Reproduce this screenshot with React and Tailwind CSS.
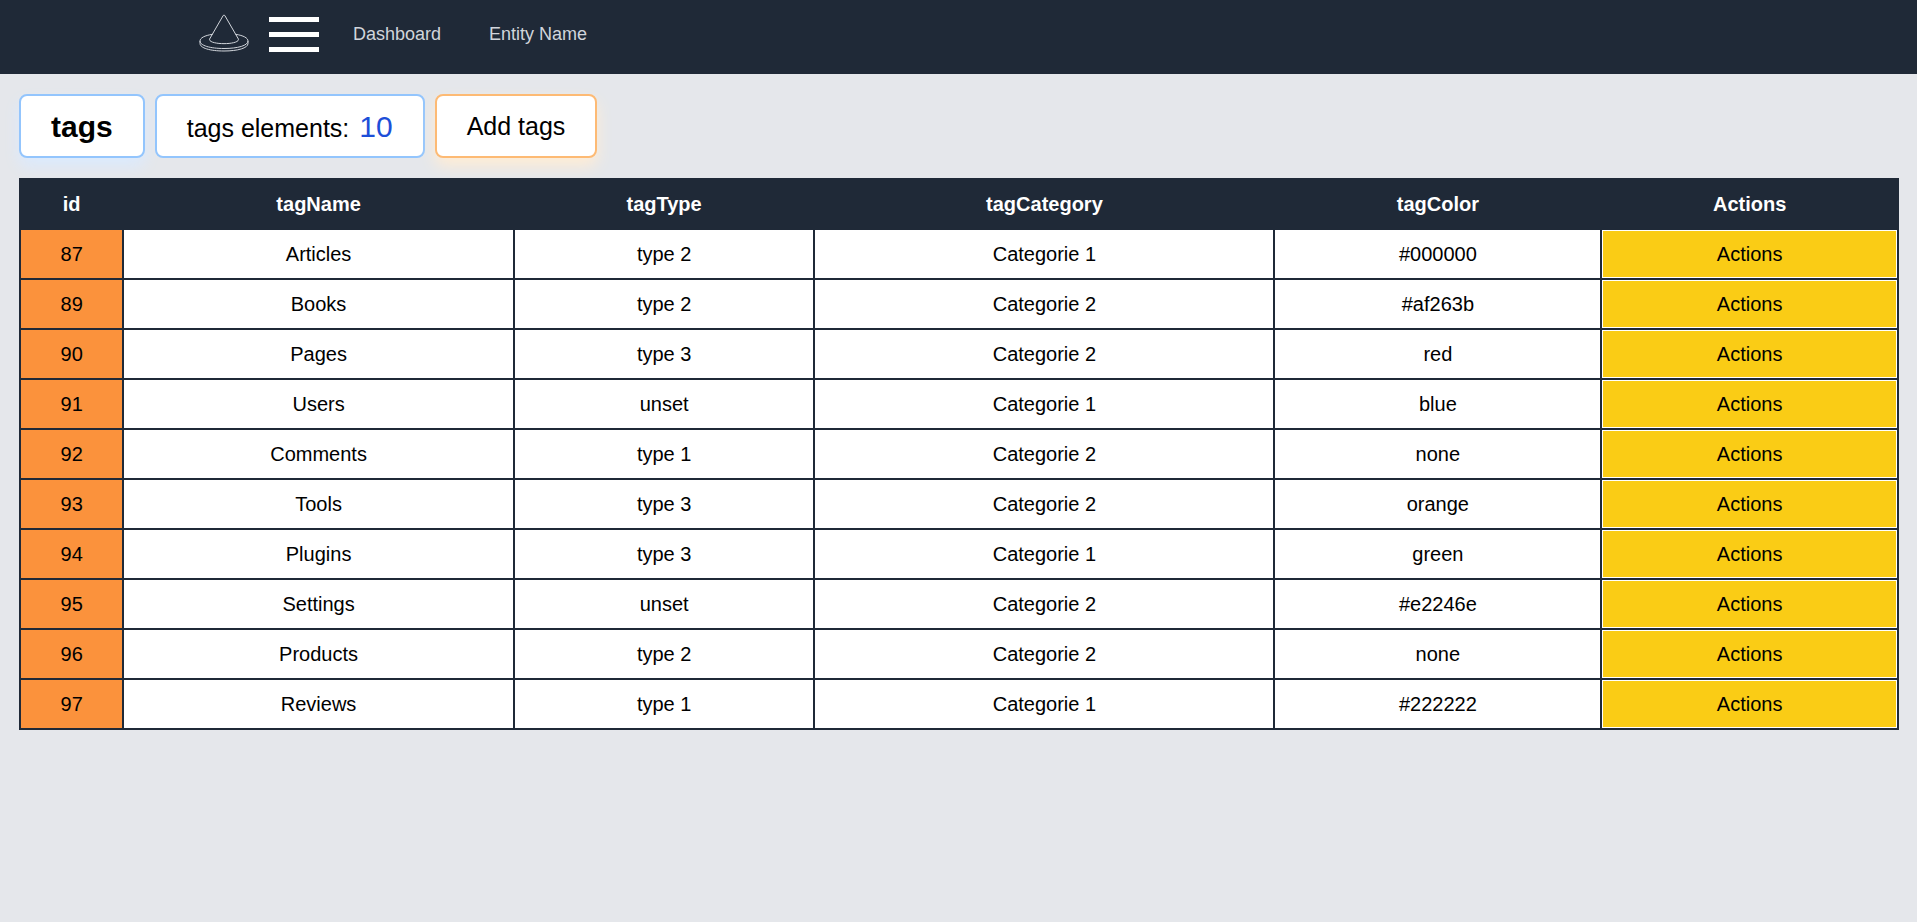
const columns = [
  { name: "id", width: "w-[5.5%]" },
  { name: "tagName", width: "w-[20.8%]" },
  { name: "tagType", width: "w-[16%]" },
  { name: "tagCategory", width: "w-[24.5%]" },
  { name: "tagColor", width: "w-[17.4%]" },
  { name: "Actions", width: "w-[15.8%]" },
];

const tags = [
  [87, "Articles", "type 2", "Categorie 1", "#000000"],
  [89, "Books", "type 2", "Categorie 2", "#af263b"],
  [90, "Pages", "type 3", "Categorie 2", "red"],
  [91, "Users", "unset", "Categorie 1", "blue"],
  [92, "Comments", "type 1", "Categorie 2", "none"],
  [93, "Tools", "type 3", "Categorie 2", "orange"],
  [94, "Plugins", "type 3", "Categorie 1", "green"],
  [95, "Settings", "unset", "Categorie 2", "#e2246e"],
  [96, "Products", "type 2", "Categorie 2", "none"],
  [97, "Reviews", "type 1", "Categorie 1", "#222222"],
];

function Logo() {
  return (
    <svg
      className="block h-[38px] w-[50px]"
      viewBox="0 0 50 38"
      fill="none"
      stroke="#d1d5db"
      strokeWidth="1"
      strokeLinejoin="round"
      aria-hidden="true"
    >
      <path d="M24.2 1.5 Q25 0.6 25.8 1.5 L39.4 25 C41.2 31.2 8.8 31.2 10.6 25 Z" />
      <path d="M13.6 20.3 C5.5 21.5 1 24 1 27 C1 31.500 11 34.500 25 34.500 C39 34.500 49 31.500 49 27 C49 24 44.500 21.500 36.600 20.300" />
      <path d="M1 27 V29.500 C1 34 11 37 25 37 C39 37 49 34 49 29.500 V27" />
    </svg>
  );
}

function Header() {
  return (
    <header className="flex h-[74px] items-start bg-[#1f2937] pt-[14px] pl-[199px]">
      <a href="#" aria-label="Home" className="block">
        <Logo />
      </a>
      <button type="button" aria-label="Menu" className="ml-5 flex w-[50px] flex-col gap-[10px] pt-[3px]">
        <span className="h-[5px] w-full bg-white" />
        <span className="h-[5px] w-full bg-white" />
        <span className="h-[5px] w-full bg-white" />
      </button>
      <nav className="ml-[34px] flex gap-12 pt-[6px] text-[18px] leading-7 text-[#d1d5db]">
        <a href="#">Dashboard</a>
        <a href="#">Entity Name</a>
      </nav>
    </header>
  );
}

export default function App() {
  return (
    <div className="min-h-screen bg-[#e5e7eb] font-['Liberation_Sans',Arial,sans-serif] text-black">
      <Header />
      <main className="pt-5 pr-[18px] pl-[19px]">
        <div className="flex gap-[10px]">
          <h1 className="flex h-16 items-center rounded-lg border-2 border-[#93c5fd] bg-white px-[30px] text-[30px] font-bold shadow-[0_8px_15px_0_#dbeafe]">
            tags
          </h1>
          <p className="flex h-16 items-center rounded-lg border-2 border-[#93c5fd] bg-white px-[30px]">
            <span className="flex items-baseline gap-[10px] text-[25px]">
              tags elements:
              <span className="text-[30px] text-[#1d4ed8]">10</span>
            </span>
          </p>
          <button
            type="button"
            className="h-16 rounded-lg border-2 border-[#fdba74] bg-white px-[30px] pt-[2px] text-[25px] shadow-[0_8px_15px_0_#ffedd5]"
          >
            Add tags
          </button>
        </div>
        <table className="relative mt-5 w-full table-fixed border-collapse bg-white text-center text-xl">
          <thead>
            <tr className="h-[50px] bg-[#1f2937] text-white">
              {columns.map((c) => (
                <th key={c.name} scope="col" className={`${c.width} border-2 border-[#1f2937] p-0 font-bold`}>
                  {c.name}
                </th>
              ))}
            </tr>
          </thead>
          <tbody>
            {tags.map(([id, ...cells]) => (
              <tr key={id} className="h-[50px]">
                <td className="border-2 border-[#1f2937] bg-[#fb923c] p-0">{id}</td>
                {cells.map((cell, i) => (
                  <td key={i} className="border-2 border-[#1f2937] p-0">
                    {cell}
                  </td>
                ))}
                <td className="border-2 border-[#1f2937] p-px">
                  <button type="button" className="block h-[46px] w-full bg-[#facc15]">
                    Actions
                  </button>
                </td>
              </tr>
            ))}
          </tbody>
        </table>
      </main>
    </div>
  );
}
